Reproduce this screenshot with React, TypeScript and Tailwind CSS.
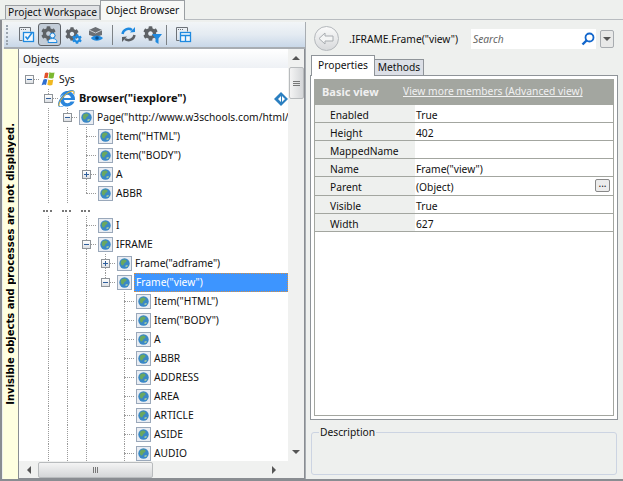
import { FaCog, FaInternetExplorer } from "react-icons/fa";

type TreeRow = {
  label: string;
  level: number;
  guides: number[];
  box?: "plus" | "minus";
  icon?: "sys" | "ie" | "globe";
  bold?: boolean;
  selected?: boolean;
  gap?: boolean;
  up?: boolean;
  down?: boolean;
};

const FONT = "font-['Noto_Sans','Open_Sans',sans-serif]";

const ROWS: TreeRow[] = [
  { label: "Sys", level: 0, guides: [], box: "minus", icon: "sys" },
  { label: 'Browser("iexplore")', level: 1, guides: [], box: "minus", icon: "ie", bold: true, up: true },
  { label: 'Page("http://www.w3schools.com/html/tryit.asp', level: 2, guides: [1], box: "minus", icon: "globe", up: true },
  { label: 'Item("HTML")', level: 3, guides: [1, 2], icon: "globe", up: true, down: true },
  { label: 'Item("BODY")', level: 3, guides: [1, 2], icon: "globe", up: true, down: true },
  { label: "A", level: 3, guides: [1, 2], box: "plus", icon: "globe", up: true, down: true },
  { label: "ABBR", level: 3, guides: [1, 2], icon: "globe", up: true },
  { label: "", level: 0, guides: [], gap: true },
  { label: "I", level: 3, guides: [1, 2], icon: "globe", up: true, down: true },
  { label: "IFRAME", level: 3, guides: [1, 2], box: "minus", icon: "globe", up: true, down: true },
  { label: 'Frame("adframe")', level: 4, guides: [1, 2, 3], box: "plus", icon: "globe", up: true, down: true },
  { label: 'Frame("view")', level: 4, guides: [1, 2, 3], box: "minus", icon: "globe", selected: true, up: true },
  ...['Item("HTML")', 'Item("BODY")', "A", "ABBR", "ADDRESS", "AREA", "ARTICLE", "ASIDE", "AUDIO"].map(
    (label): TreeRow => ({ label, level: 5, guides: [1, 2, 3], icon: "globe", up: true, down: true }),
  ),
];

const PROPS: { name: string; value: string; tall?: boolean; more?: boolean }[] = [
  { name: "Enabled", value: "True" },
  { name: "Height", value: "402" },
  { name: "MappedName", value: "" },
  { name: "Name", value: 'Frame("view")' },
  { name: "Parent", value: "(Object)", tall: true, more: true },
  { name: "Visible", value: "True" },
  { name: "Width", value: "627" },
];

function Globe() {
  return (
    <svg width="15" height="15" viewBox="0 0 15 15" className="shrink-0 ml-[2px]">
      <rect x="0.500" y="0.500" width="14" height="14" fill="#e9edf3" stroke="#9aa8ba" />
      <circle cx="7.500" cy="7.500" r="5.200" fill="#3a88c6" />
      <path d="M4.500 4.500c1.500-1.500 4-1.500 5 0 .5 1-1 2-2 2.500-.5 1.500-1.500 3-2.500 2.500C3.800 8.500 3.300 6 4.500 4.500z" fill="#6aa860" />
      <path d="M8.500 9.500c1-.5 2-.5 2.500 0-.5 1-1.500 1.500-2.500 1.500z" fill="#a9d09a" />
    </svg>
  );
}

function SysIcon() {
  return (
    <svg width="17" height="17" viewBox="0 0 17 17" className="shrink-0">
      <path d="M6 2c1.500-1 2.500-.5 3.500 0L8.500 7.500C7.500 7 6 6.800 5 7.500z" fill="#e2512a" />
      <path d="M10.500 1c1.500 1 3 1 5 .5L14.500 7c-2 .8-3.500.5-5 0z" fill="#7cb82f" />
      <path d="M4.500 8.500c1.200-.8 2.800-.7 3.800 0L7 14c-1.200-.8-2.800-.8-4.500.5z" fill="#2f6fd0" />
      <path d="M9.300 8.500c1.500.7 3 .8 5 0l-1 5.500c-2 .8-3.500.5-5-.2z" fill="#f0b820" />
    </svg>
  );
}

function IeIcon() {
  return (
    <span className="relative w-[17px] h-[17px] shrink-0">
      <FaInternetExplorer className="w-[17px] h-[17px] text-[#2b86dc]" />
      <svg width="17" height="17" viewBox="0 0 17 17" className="absolute top-0 left-0">
        <path d="M1 16C0 13 6 3 14 1c2 0 2 2 1.500 3" fill="none" stroke="#e9b52c" strokeWidth="1" />
      </svg>
    </span>
  );
}

function Expander({ kind }: { kind: "plus" | "minus" }) {
  return (
    <span className="absolute left-[5px] top-[5px] w-[9px] h-[9px] border border-[#8f9499] bg-gradient-to-b from-white to-[#dde0e4] flex items-center justify-center">
      <span className="relative w-[5px] h-px bg-[#2f5f9c]">
        {kind === "plus" && <span className="absolute left-[2px] -top-[2px] w-px h-[5px] bg-[#2f5f9c]" />}
      </span>
    </span>
  );
}

function Guide() {
  return (
    <div className="w-[19px] h-[19px] shrink-0">
      <div className="ml-[9px] h-full border-l border-dotted border-[#9a9a9a]" />
    </div>
  );
}

function Row({ row }: { row: TreeRow }) {
  if (row.gap) {
    return (
      <div className="flex h-[13px] pl-[19px]">
        {[1, 2, 3].map((i) => (
          <div key={i} className="w-[19px] pl-[4px] pt-[7px]">
            <div className="w-[9px] border-t-2 border-dotted border-[#777]" />
          </div>
        ))}
      </div>
    );
  }
  const cells = [];
  for (let i = 0; i < row.level; i++) {
    cells.push(row.guides.includes(i) ? <Guide key={i} /> : <div key={i} className="w-[19px] shrink-0" />);
  }
  return (
    <div className="flex h-[19px] items-center whitespace-nowrap">
      {cells}
      <div className="relative w-[19px] h-[19px] shrink-0">
        {row.up && <div className="absolute left-[9px] top-0 h-[9px] border-l border-dotted border-[#9a9a9a]" />}
        {row.down && <div className="absolute left-[9px] top-[9px] h-[10px] border-l border-dotted border-[#9a9a9a]" />}
        <div className="absolute left-[9px] top-[9px] w-[10px] border-t border-dotted border-[#9a9a9a]" />
        {row.box && <Expander kind={row.box} />}
      </div>
      <div className="w-[19px] h-[19px] shrink-0 flex items-center justify-start">
        {row.icon === "sys" && <SysIcon />}
        {row.icon === "ie" && <IeIcon />}
        {row.icon === "globe" && <Globe />}
      </div>
      {row.selected ? (
        <span className="flex-1 h-[19px] pl-[1px] leading-[17px] bg-[#3d95ff] text-white border border-dotted border-[#d89040]">
          {row.label}
        </span>
      ) : (
        <span className={`h-[19px] leading-[18px] pl-[1px] text-[#111] ${row.bold ? "font-bold text-[11px] pl-[2px]" : ""}`}>
          {row.label}
        </span>
      )}
      {row.bold && (
        <svg width="14" height="14" viewBox="0 0 14 14" className="absolute left-[255px]">
          <path d="M7 0l7 7-7 7-7-7z" fill="#2b7fc0" />
          <path d="M4 7l3-3v6zM8 4l3 3-3 3z" fill="#fff" />
        </svg>
      )}
    </div>
  );
}

function ArrowBtn({ dir }: { dir: "up" | "down" | "left" | "right" }) {
  const cls = {
    up: "border-x-[4px] border-x-transparent border-b-[4px] border-b-[#555]",
    down: "border-x-[4px] border-x-transparent border-t-[4px] border-t-[#555]",
    left: "border-y-[4px] border-y-transparent border-r-[4px] border-r-[#555]",
    right: "border-y-[4px] border-y-transparent border-l-[4px] border-l-[#555]",
  }[dir];
  return <span className={`w-0 h-0 ${cls}`} />;
}

function WindowIcon({ variant }: { variant: "check" | "panel" }) {
  return (
    <svg width="17" height="17" viewBox="0 0 17 17">
      <path d="M1.500 14.500V1.500h11v4" fill="none" stroke="#6d7278" />
      <path d="M3 3.500h1M5 3.500h1M7 3.500h1" stroke="#6d7278" />
      <path d="M1.500 14.500h3" stroke="#6d7278" />
      <rect x="5.500" y="6.500" width="10" height="9" fill="#f4f8fc" stroke="#1f8ae0" strokeWidth="1.300" />
      {variant === "check" ? (
        <path d="M7.500 10.500l2 2.500 5-7" fill="none" stroke="#1f8ae0" strokeWidth="1.600" />
      ) : (
        <path d="M5.500 9.500h10M10.500 9.500v6" stroke="#1f8ae0" strokeWidth="1.300" />
      )}
    </svg>
  );
}

function Refresh() {
  return (
    <svg width="17" height="17" viewBox="0 0 17 17">
      <path d="M2.500 8a6 6 0 0 1 9.500-4" fill="none" stroke="#1f8ae0" strokeWidth="2.400" />
      <path d="M10 6.500l5-.5V1z" fill="#1f8ae0" />
      <path d="M14.500 9a6 6 0 0 1-9.500 4" fill="none" stroke="#5c6065" strokeWidth="2.400" />
      <path d="M7 10.500l-5 .5v5z" fill="#5c6065" />
    </svg>
  );
}

function Toolbar() {
  return (
    <div className="flex items-center h-[27px] ml-[2px] bg-gradient-to-b from-[#f2f5f7] via-[#e4ebf2] to-[#c9d8e8] border-b-2 border-[#a8adb2]">
      <div className="ml-[2px] mr-[8px] h-[20px] border-l-2 border-dotted border-[#9aa4ae]" />
      <div className="w-[20px] flex justify-center">
        <WindowIcon variant="check" />
      </div>
      <div className="w-[23px] h-[23px] mx-[2px] rounded-[3px] border border-[#5f6368] bg-[#c3cdd8] flex items-center justify-center relative">
        <FaCog className="w-[15px] h-[15px] text-[#5e6266] -mt-[2px] -ml-[3px]" />
        <svg width="11" height="11" viewBox="0 0 11 11" className="absolute right-[2px] bottom-[2px]">
          <circle cx="5.500" cy="3.500" r="2.500" fill="#e8f2fb" stroke="#1f8ae0" />
          <path d="M1 10.500c0-3 2-4 4.500-4s4.500 1 4.500 4z" fill="#e8f2fb" stroke="#1f8ae0" />
        </svg>
      </div>
      <div className="w-[20px] relative flex justify-center">
        <FaCog className="w-[14px] h-[14px] text-[#5e6266] -ml-[3px] -mt-[2px]" />
        <FaCog className="absolute left-[9px] top-[5px] w-[10px] h-[10px] text-[#1f8ae0]" />
      </div>
      <div className="w-[22px] ml-[2px] flex justify-center">
        <svg width="17" height="17" viewBox="0 0 17 17">
          <path d="M1 4l6.500-3L14 4v5l-6 2-7-2z" fill="#6b6f74" />
          <path d="M1 4l6.500 3L14 4" fill="none" stroke="#c9cdd2" />
          <path d="M3 12c2-3.500 9-3.500 12 0-3 3.500-10 3.500-12 0z" fill="#1f8ae0" />
          <circle cx="9" cy="12" r="1.800" fill="#0c4f8c" />
        </svg>
      </div>
      <div className="mx-[5px] h-[20px] border-l border-[#7d8286]" />
      <div className="w-[18px] ml-[1px] flex justify-center">
        <Refresh />
      </div>
      <div className="w-[20px] ml-[4px] relative flex justify-center">
        <FaCog className="w-[15px] h-[15px] text-[#5e6266] -mt-[2px] -ml-[2px]" />
        <svg width="10" height="10" viewBox="0 0 10 10" className="absolute left-[11px] top-[6px]">
          <path d="M0 0h10L6.500 4.500V10L3.500 8V4.500z" fill="#1f8ae0" />
        </svg>
      </div>
      <div className="mx-[5px] h-[20px] border-l border-[#7d8286]" />
      <div className="w-[18px] ml-[2px] flex justify-center">
        <WindowIcon variant="panel" />
      </div>
    </div>
  );
}

function TreePane() {
  return (
    <div className="flex flex-1 min-h-0 ml-[1px]">
      <div className="w-[16px] bg-[#ffffe0] border-r border-[#8a8d92] flex items-center justify-center">
        <span className="[writing-mode:vertical-rl] rotate-180 font-bold text-[10px] text-black whitespace-nowrap font-['DejaVu_Sans',sans-serif]">
          Invisible objects and processes are not displayed.
        </span>
      </div>
      <div className="flex-1 min-w-0 flex flex-col border border-l-0 border-t-0 border-[#8a8d92] bg-white">
        <div className="flex flex-1 min-h-0">
          <div className="flex-1 min-w-0 flex flex-col overflow-hidden relative">
            <div className="h-[19px] shrink-0 pl-[4px] leading-[21px] bg-gradient-to-b from-white to-[#eef1f5] text-[#111]">
              Objects
            </div>
            <div className="flex-1 overflow-hidden pt-[2px] pl-[1px]">
              {ROWS.map((row, i) => (
                <Row key={i} row={row} />
              ))}
            </div>
          </div>
          <div className="w-[16px] shrink-0 bg-[#f0f1f0] flex flex-col items-center">
            <div className="h-[18px] flex items-center justify-center">
              <ArrowBtn dir="up" />
            </div>
            <div className="w-[15px] h-[32px] rounded-[2px] border border-[#b8bbbd] bg-gradient-to-r from-[#f4f4f4] to-[#d4d6d8] flex flex-col items-center justify-center gap-px">
              <span className="w-[7px] h-px bg-[#777]" />
              <span className="w-[7px] h-px bg-[#777]" />
              <span className="w-[7px] h-px bg-[#777]" />
            </div>
            <div className="flex-1" />
            <div className="h-[18px] flex items-center justify-center">
              <ArrowBtn dir="down" />
            </div>
          </div>
        </div>
        <div className="h-[17px] shrink-0 bg-[#f0f1f0] flex items-center">
          <div className="w-[19px] flex justify-center">
            <ArrowBtn dir="left" />
          </div>
          <div className="w-[115px] h-[16px] rounded-[2px] border border-[#b8bbbd] bg-gradient-to-b from-[#f4f4f4] to-[#d4d6d8] flex items-center justify-center gap-px">
            <span className="w-px h-[6px] bg-[#777]" />
            <span className="w-px h-[6px] bg-[#777]" />
            <span className="w-px h-[6px] bg-[#777]" />
          </div>
          <div className="flex-1" />
          <div className="w-[22px] flex justify-center pr-[6px]">
            <ArrowBtn dir="right" />
          </div>
          <div className="w-[16px]" />
        </div>
      </div>
    </div>
  );
}

function RightPane() {
  return (
    <div className="w-[317px] shrink-0 flex flex-col">
      <div className="h-[33px] shrink-0 flex items-center">
        <div className="ml-[8px] w-[25px] h-[25px] rounded-full border border-[#b4b8bc] bg-gradient-to-b from-[#fafafa] to-[#d8dadc] flex items-center justify-center">
          <svg width="17" height="13" viewBox="0 0 17 13">
            <path d="M1 6.500L7 1v3h8v5H7v3z" fill="#f4f5f5" stroke="#a8acb0" />
          </svg>
        </div>
        <span className="ml-[10px] w-[122px] pt-[2px] text-[#111] whitespace-nowrap">.IFRAME.Frame("view")</span>
        <div className="w-[125px] h-[20px] bg-white flex items-center pl-[2px] pr-[1px]">
          <span className="flex-1 pt-[2px] italic text-[#666]">Search</span>
          <svg width="14" height="14" viewBox="0 0 14 14">
            <circle cx="8.500" cy="5.500" r="4" fill="#fff" stroke="#1166cc" strokeWidth="1.800" />
            <path d="M5.500 8.500L1.500 12.500" stroke="#1166cc" strokeWidth="2.400" />
          </svg>
        </div>
        <div className="ml-[4px] w-[14px] h-[18px] rounded-[2px] border border-[#a8acb0] bg-[#e8e9e8] flex items-center justify-center">
          <ArrowBtn dir="down" />
        </div>
      </div>
      <div className="flex items-end h-[21px] shrink-0 pl-[5px] relative z-10">
        <div className="w-[64px] h-[21px] bg-white border border-b-0 border-[#8f9499] text-center leading-[18px] text-[#111]">
          Properties
        </div>
        <div className="w-[49px] h-[17px] bg-[#dcdfe6] border border-l-0 border-[#8f9499] text-center leading-[15px] text-[#111]">
          Methods
        </div>
      </div>
      <div className="h-[345px] shrink-0 ml-[4px] mr-[5px] -mt-px border border-[#8f9499] bg-white p-[3px]">
        <div className="h-full border-x border-b border-[#a3a6a0]">
          <div className="h-[26px] bg-[#a3a6a0] flex items-center text-white">
            <span className="w-[88px] pl-[7px] font-bold text-[11px] text-[#f0f0f0]">Basic view</span>
            <span className="underline text-[#f0f0f0]">View more members (Advanced view)</span>
          </div>
          {PROPS.map((p) => (
            <div key={p.name} className={`flex border-b border-[#a3a6a0] ${p.tall ? "h-[19px]" : "h-[18px]"}`}>
              <div className="w-[100px] bg-[#eef0ee] pl-[15px] leading-[21px] text-[#111]">{p.name}</div>
              <div className="flex-1 pl-[1px] leading-[21px] text-[#111] flex justify-between">
                <span>{p.value}</span>
                {p.more && (
                  <span className="mr-[3px] w-[15px] h-[13px] mt-[2px] rounded-[2px] border border-[#888] bg-[#ececec] leading-[7px] text-center text-[10px]">
                    ...
                  </span>
                )}
              </div>
            </div>
          ))}
        </div>
      </div>
      <div className="relative h-[43px] shrink-0 mt-[12px] ml-[5px] mr-[6px] rounded-[3px] border border-[#ccd4e2]">
        <span className="absolute left-[7px] -top-[8px] px-[1px] leading-[14px] bg-[#eef0ee] text-[#111]">Description</span>
      </div>
    </div>
  );
}

export default function App() {
  return (
    <div className={`w-[623px] h-[481px] bg-[#eef0ee] flex flex-col overflow-hidden text-[10.25px] ${FONT}`}>
      <div className="h-[20px] shrink-0 flex items-end pl-[5px] border-b border-[#b8bcc0]">
        <div className="w-[95px] h-[14px] bg-[#e2e4e6] border border-b-0 border-[#9a9ea2] text-center leading-[13px] text-[#111] whitespace-nowrap">
          Project Workspace
        </div>
        <div className="w-[85px] h-[20px] -mb-px bg-[#f7f8f7] border border-b-0 border-[#9a9ea2] text-center leading-[18px] text-[#111] whitespace-nowrap">
          Object Browser
        </div>
      </div>
      <div className="flex-1 min-h-0 flex border-l-2 border-b-2 border-[#8a8d92] pt-[2px]">
        <div className="w-[303px] shrink-0 flex flex-col">
          <Toolbar />
          <TreePane />
        </div>
        <div className="w-px bg-[#a8adb2]" />
        <RightPane />
      </div>
    </div>
  );
}
